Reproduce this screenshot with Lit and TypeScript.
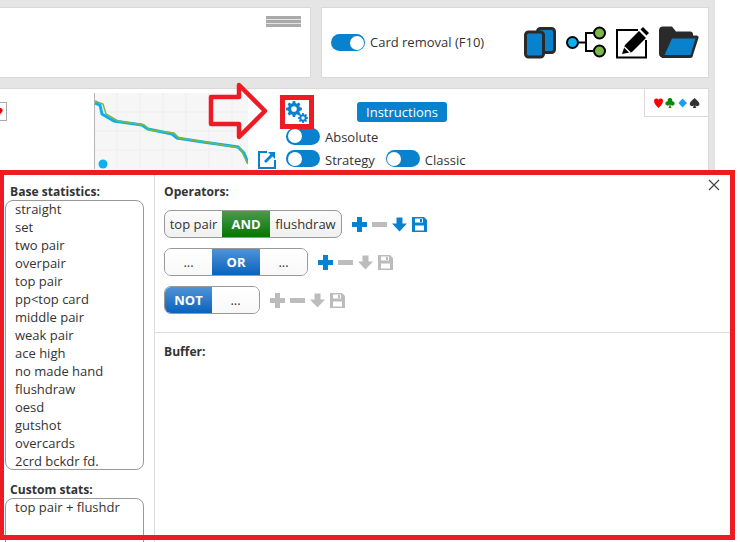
import { LitElement, html, css, svg } from "lit";
import { customElement } from "lit/decorators.js";

const BLUE = "#0882cc";
const GRAY = "#bcbcbc";

function gearPath(cx: number, cy: number, outer: number, inner: number, hole: number, teeth: number) {
  const pts: string[] = [];
  const step = (Math.PI * 2) / teeth;
  for (let i = 0; i < teeth; i++) {
    const a = i * step;
    const w = step * 0.24;
    const p = (r: number, t: number) => `${(cx + r * Math.cos(t)).toFixed(2)} ${(cy + r * Math.sin(t)).toFixed(2)}`;
    pts.push(p(inner, a - w * 1.5), p(outer, a - w * 0.8), p(outer, a + w * 0.8), p(inner, a + w * 1.5));
  }
  const d = `M${pts.join("L")}Z`;
  const h = `M${cx - hole} ${cy}a${hole} ${hole} 0 1 0 ${hole * 2} 0a${hole} ${hole} 0 1 0 ${-hole * 2} 0Z`;
  return d + h;
}

const BASE = ["straight", "set", "two pair", "overpair", "top pair", "pp<top card", "middle pair", "weak pair", "ace high", "no made hand", "flushdraw", "oesd", "gutshot", "overcards", "2crd bckdr fd."];

const toolIcons = (on: boolean[]) => {
  const c = (i: number) => (on[i] ? BLUE : GRAY);
  return html`<div class="tools">
    <svg width="15" height="15" viewBox="0 0 15 15"><path fill=${c(0)} d="M5 0h5v5h5v5h-5v5H5v-5H0V5h5z"/></svg>
    <svg width="15" height="15" viewBox="0 0 15 15"><rect y="5" width="15" height="5" fill=${c(1)}/></svg>
    <svg width="15" height="15" viewBox="0 0 15 15"><path fill=${c(2)} d="M4.500 0.500h6v6h4.500L7.500 14.500 0 6.500h4.500z"/></svg>
    <svg width="15" height="15" viewBox="0 0 15 15"><path fill-rule="evenodd" fill=${c(3)} d="M0 0h12l3 3v12H0zM3 1.500v4h8v-4zM8 2h2v3H8zM3 8.500v5h9v-5z"/></svg>
  </div>`;
};

@customElement("app-root")
export class AppRoot extends LitElement {
  static styles = css`
    :host { display: block; width: 740px; height: 542px; position: relative; overflow: hidden; background: #fff;
      font-family: "Open Sans", "Liberation Sans", sans-serif; font-size: 13px; color: #333; }
    .bg { width: 715px; height: 170px; background: #e5e5e5; padding-top: 7px; box-sizing: border-box; display: flex; flex-direction: column; gap: 10px; overflow: hidden; }
    .top { display: flex; gap: 10px; height: 71px; flex: none; }
    .panel { background: #fff; border: 1px solid #d9d9d9; box-sizing: border-box; }
    .p1 { width: 311px; border-left: 0; padding: 8px 9px 0 0; display: flex; justify-content: flex-end; }
    .burger { width: 35px; height: 11px; background: repeating-linear-gradient(#aaa 0 3px, #e4e4e4 3px 4px); }
    .p2 { width: 388px; display: flex; align-items: center; padding-left: 9px; }
    .p2 .label { margin-left: 5px; width: 154px; padding-bottom: 2px; }
    .icons { display: flex; align-items: center; gap: 10px; }
    .main { width: 709px; flex: 1; min-height: 0; background: #fff; border: 1px solid #d9d9d9; border-left: 0; border-bottom: 0; box-sizing: border-box; display: flex; position: relative; }
    .left { width: 94px; padding-top: 13px; }
    .mini { width: 7px; height: 19px; border: 1px solid #aaa; border-left: 0; box-sizing: border-box; overflow: hidden; }
    .mini svg { display: block; margin-top: 3px; }
    .chart { margin-top: 4px; }
    .ctrl { position: relative; margin-left: 10px; flex: 1; display: flex; flex-direction: column; }
    .ext { position: absolute; left: 0; top: 62px; }
    .ctl-top { display: flex; align-items: flex-start; padding: 13px 0 0 28px; height: 23px; }
    .gears { display: block; margin-top: -1px; flex: none; }
    .ins { margin-left: 49px; width: 90px; height: 20px; background: #0882cc; color: #fff; border-radius: 3px; text-align: center; line-height: 20px; }
    .ctl-row { display: flex; align-items: center; height: 23px; padding-left: 28px; }
    .ctl-row span { margin: 2px 11px 0 5px; }
    .sw { width: 34px; height: 17px; background: #0882cc; border-radius: 9px; position: relative; flex: none; display: block; }
    .sw::after { content: ""; position: absolute; top: 1.500px; width: 14px; height: 14px; border-radius: 50%; background: #fff; }
    .sw.on::after { right: 1.500px; }
    .sw.off::after { left: 1.500px; }
    .suits { position: absolute; right: 0; top: 0; width: 64px; height: 28px; border-left: 1px solid #d9d9d9; border-bottom: 1px solid #d9d9d9; box-sizing: border-box; display: flex; align-items: center; justify-content: center; }
    .dialog { position: absolute; left: 0; top: 172px; width: 733px; height: 370px; background: #fff; display: flex; }
    .dleft { width: 155px; border-right: 1px solid #ddd; box-sizing: border-box; padding: 11px 0 0 5px; flex: none; }
    h4 { margin: 0; font-size: 12.100px; font-weight: 700; line-height: 17px; color: #333; }
    .dleft h4 { padding-left: 5px; }
    .list { width: 139px; box-sizing: border-box; border: 1px solid #999; border-radius: 8px; padding: 0 0 0 9px; line-height: 16px; }
    .list div { margin-bottom: 2px; }
    .list.base { height: 270px; margin-bottom: 11px; }
    .list.custom { height: 70px; }
    .dright { flex: 1; display: flex; flex-direction: column; }
    .ops { padding: 11px 9px 0; height: 161px; box-sizing: border-box; border-bottom: 1px solid #ddd; }
    .rows { display: flex; flex-direction: column; gap: 10px; margin-top: 10px; }
    .row { display: flex; align-items: center; gap: 10px; }
    .group { display: flex; height: 28px; border: 1px solid #999; border-radius: 7px; overflow: hidden; box-sizing: border-box; background: linear-gradient(#fcfcfc, #f0f0f0); }
    .cell { width: 47px; line-height: 26px; text-align: center; }
    .cell.w58 { width: 57px; } .cell.w72 { width: 71px; }
    .cell.act { color: #fff; font-weight: 700; background: linear-gradient(#4f93d6, #0a63bd); }
    .cell.mid { width: 48px; }
    .cell.green { background: linear-gradient(#4a9a4a, #067506); }
    .cell.blank { background: linear-gradient(#fff, #f8f8f8); }
    .tools { display: flex; gap: 5px; }
    .buffer { padding: 10px 9px; }
    .close { position: absolute; right: 13px; top: 7px; display: block; }
    .frame { position: absolute; left: 0; top: 170px; width: 735px; height: 370px; border: 5px solid #ed1c24; border-left-width: 4px; box-sizing: border-box; pointer-events: none; }
    .arrow { position: absolute; left: 208px; top: 80px; display: block; }
    .gbox { position: absolute; left: 280px; top: 95px; width: 34px; height: 34px; border: 5px solid #ed1c24; box-sizing: border-box; pointer-events: none; }
  `;

  private chart() {
    const grid = [];
    for (let i = 1; i < 7; i++) grid.push(svg`<line x1=${i * 23} x2=${i * 23} y1="0" y2="76" stroke="#eeeef2"/>`);
    for (let i = 1; i < 4; i++) grid.push(svg`<line y1=${i * 19} y2=${i * 19} x1="0" x2="154" stroke="#eeeef2"/>`);
    return html`<svg class="chart" width="154" height="76" viewBox="0 0 154 76">
      <rect width="154" height="76" fill="#f6f6f6"/>${grid}
      <line x1="0.500" x2="0.500" y1="0" y2="76" stroke="#b5b5b5"/>
      <polyline fill="none" stroke="#0cb0ee" stroke-width="3" points="1,10 6,12 8,21 20,28 48,32 54,36 78,41 83,45 109,49 144,54 150,60 154,70"/>
      <polyline fill="none" stroke="#7ab648" stroke-width="1.500" points="1,8 9,11 12,21 24,28 50,32 56,37 80,40 85,45 111,49 146,55 154,71"/>
      <circle cx="9" cy="71" r="4.500" fill="#0cb0ee"/>
    </svg>`;
  }

  render() {
    return html`
      <div class="bg">
        <div class="top">
          <div class="panel p1"><div class="burger"></div></div>
          <div class="panel p2">
            <i class="sw on"></i><div class="label">Card removal (F10)</div>
            <div class="icons">
              <svg width="32" height="32" viewBox="0 0 32 32"><rect x="13.500" y="1.500" width="17" height="24" rx="3" fill=${BLUE} stroke="#2a2a2a" stroke-width="3"/><rect x="1.500" y="5" width="18" height="25" rx="3" fill=${BLUE} stroke="#2a2a2a" stroke-width="3"/></svg>
              <svg width="40" height="33" viewBox="0 0 40 33"><path d="M13 16.500h7M27 7h-7v18h7" fill="none" stroke="#000" stroke-width="2"/><circle cx="6.500" cy="16.500" r="5.500" fill="#0cb0ee" stroke="#000" stroke-width="2"/><circle cx="33.500" cy="7" r="5.500" fill="#7ab648" stroke="#000" stroke-width="2"/><circle cx="33.500" cy="25" r="5.500" fill="#7ab648" stroke="#000" stroke-width="2"/></svg>
              <svg width="33" height="33" viewBox="0 0 33 33"><path d="M22 4H1v27.500h29V14" fill="none" stroke="#000" stroke-width="2"/><path d="M6 28l3-9L23 5l7 7-14 14z" fill="#000"/><path d="M24.500 3.500l2.500-2.500 6 6-2.500 2.500z" fill="#000"/><path d="M8.500 21l5.500 5.500" stroke="#fff" stroke-width="1.500"/></svg>
              <svg width="40" height="33" viewBox="0 0 40 33"><path d="M4 0.500h9l4 5h14a3 3 0 0 1 3 3v3H12l-6 20H4a4 4 0 0 1-4-4V4.500a4 4 0 0 1 4-4z" fill="#2a2a2a"/><path d="M11 9.500h26.500a2 2 0 0 1 2 2.500L34 29a3 3 0 0 1-3 3H3.500a1 1 0 0 1-1-1z" fill="#2a2a2a"/><path d="M13 12.500h23.500l-5 16.500H5.500z" fill=${BLUE}/></svg>
            </div>
          </div>
        </div>
        <div class="main">
          <div class="left"><div class="mini"><svg width="6" height="10" viewBox="0 0 6 10"><path d="M-1.500 3.500a2 2 0 0 1 4 1.500q-.8 2-4 4.500z" fill="#e00"/></svg></div></div>
          ${this.chart()}
          <div class="ctrl">
            <svg class="ext" width="18" height="18" viewBox="0 0 18 18"><path d="M9 1H1v16h16V9" fill="none" stroke=${BLUE} stroke-width="2"/><path d="M10 1h7v7l-2.500-2.500L8 12 6 10l6.500-6.500z" fill=${BLUE}/></svg>
            <div class="ctl-top">
              <svg class="gears" width="22" height="23" viewBox="0 0 22 23"><path fill-rule="evenodd" fill=${BLUE} d=${gearPath(8, 8, 8, 6, 2.8, 8)}/><path fill-rule="evenodd" fill=${BLUE} d=${gearPath(17, 17, 5, 3.7, 1.7, 8)}/></svg>
              <div class="ins">Instructions</div>
            </div>
            <div class="ctl-row"><i class="sw off"></i><span>Absolute</span></div>
            <div class="ctl-row"><i class="sw off"></i><span>Strategy</span><i class="sw off"></i><span>Classic</span></div>
          </div>
          <div class="suits">
            <svg width="46" height="10" viewBox="0 0 46 10">
              <path d="M4.500 10Q0 6 0 2.800a2.400 2.400 0 0 1 4.500-1a2.400 2.400 0 0 1 4.500 1Q9 6 4.500 10z" fill="#f00"/>
              <path d="M16.500 6.500q0 2 1 3.500h-3q1-1.500 1-3.500q-1 1.500-2.500 1a2.200 2.200 0 0 1 .9-4.300a2.300 2.300 0 1 1 4.200 0a2.200 2.200 0 0 1 .9 4.300q-1.500.5-2.500-1z" fill="#0a8a0a"/>
              <path d="M28.500 0.500l4.500 4.500-4.500 4.500-4-4.500z" fill="#1a9ff0"/>
              <path d="M40.500 0Q45.500 4 45.500 6a2.200 2.200 0 0 1-4 1.200q0 1.500 1 2.800h-3.800q1-1.300 1-2.800a2.200 2.200 0 0 1-4-1.200Q35.700 4 40.500 0z" fill="#333"/>
            </svg>
          </div>
        </div>
      </div>

      <div class="dialog">
        <div class="dleft">
          <h4>Base statistics:</h4>
          <div class="list base">${BASE.map((b) => html`<div>${b}</div>`)}</div>
          <h4>Custom stats:</h4>
          <div class="list custom"><div>top pair + flushdr</div></div>
        </div>
        <div class="dright">
          <div class="ops">
            <h4>Operators:</h4>
            <div class="rows">
              <div class="row">
                <div class="group"><div class="cell w58">top pair</div><div class="cell act mid green">AND</div><div class="cell w72">flushdraw</div></div>
                ${toolIcons([true, false, true, true])}
              </div>
              <div class="row">
                <div class="group"><div class="cell blank">...</div><div class="cell act mid">OR</div><div class="cell blank">...</div></div>
                ${toolIcons([true, false, false, false])}
              </div>
              <div class="row">
                <div class="group"><div class="cell act">NOT</div><div class="cell blank">...</div></div>
                ${toolIcons([false, false, false, false])}
              </div>
            </div>
          </div>
          <div class="buffer"><h4>Buffer:</h4></div>
        </div>
        <svg class="close" width="12" height="12" viewBox="0 0 12 12"><path d="M1 1l10 10M11 1L1 11" stroke="#444" stroke-width="1.200" fill="none"/></svg>
      </div>
      <div class="frame"></div>
      <svg class="arrow" width="72" height="62" viewBox="0 0 72 62"><path d="M3 17h28V5l26 26-26 26V44H3z" fill="none" stroke="#ed1c24" stroke-width="4.500" stroke-linejoin="round"/></svg>
      <div class="gbox"></div>
    `;
  }
}
